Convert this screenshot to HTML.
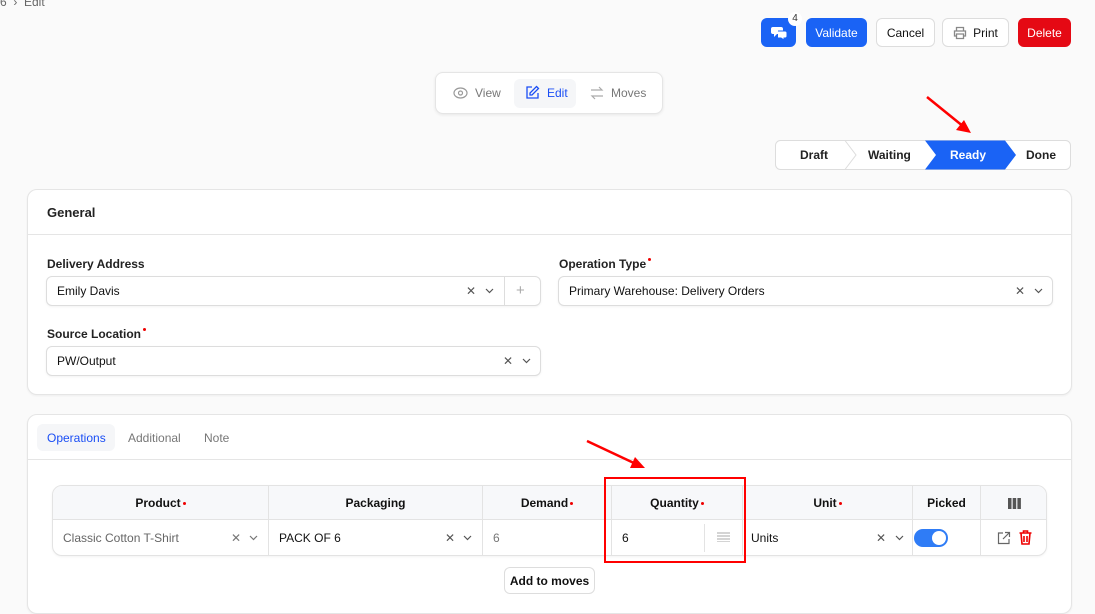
<!DOCTYPE html>
<html><head><meta charset="utf-8"><style>
*{box-sizing:border-box;margin:0;padding:0}
body{width:1095px;height:604px;overflow:hidden;background:#fafafa;font-family:"Liberation Sans",sans-serif;font-size:12px;color:#111;position:relative}
.a{position:absolute}
.btn{position:absolute;top:18px;height:29px;border-radius:6px;display:flex;align-items:center;justify-content:center;font-size:12px}
.card{position:absolute;background:#fff;border:1px solid #e5e5e5;border-radius:10px;box-shadow:0 1px 2px rgba(0,0,0,.05)}
.lbl{position:absolute;font-size:12px;font-weight:bold;color:#222}
.req{display:inline-block;width:3px;height:3px;border-radius:2px;background:#e00;vertical-align:top;margin-left:2px;margin-top:1px}
.inp{position:absolute;height:30px;border:1px solid #ddd;border-radius:6px;background:#fff;box-shadow:0 1px 2px rgba(0,0,0,.05);font-size:12px;padding-left:10px;display:flex;align-items:center}
.ic{position:absolute;color:#555;font-size:12px}
.cv{position:absolute;width:9px;height:6px}
.th{position:absolute;top:0;height:34px;display:flex;align-items:center;justify-content:center;font-weight:bold;font-size:12px;border-right:1px solid #e3e3e3}
.td{position:absolute;top:34px;height:36px;display:flex;align-items:center;padding-left:10px;font-size:12px;border-right:1px solid #e3e3e3}
</style></head><body>
<div class="a" style="left:0;top:-5px;font-size:12px;color:#666">6 &nbsp;›&nbsp; Edit</div>

<div class="btn" style="left:761px;width:35px;background:#1a63f5;color:#fff"><svg width="16" height="14" viewBox="0 0 16 14"><path d="M2 1h8a2 2 0 0 1 2 2v3a2 2 0 0 1-2 2H6l-3 3V8H2a2 2 0 0 1-2-2V3a2 2 0 0 1 2-2z" fill="#fff"/><path d="M7 5h7a2 2 0 0 1 2 2v3a2 2 0 0 1-2 2h-1v2l-3-2H7" fill="#fff" stroke="#1a63f5"/></svg></div>
<div class="a" style="left:788px;top:12px;width:14px;height:14px;border-radius:7px;background:#fff;font-size:10px;text-align:center;line-height:13px;color:#333">4</div>
<div class="btn" style="left:806px;width:61px;background:#1a63f5;color:#fff">Validate</div>
<div class="btn" style="left:876px;width:59px;background:#fff;border:1px solid #ddd">Cancel</div>
<div class="btn" style="left:942px;width:67px;background:#fff;border:1px solid #ddd"><svg width="14" height="14" viewBox="0 0 14 14" fill="none" stroke="#888" stroke-width="1.3" style="margin-right:6px"><path d="M3.5 5V1.5h7V5M3.5 10H1.5V5h11v5h-2M3.5 8h7v4.5h-7z"/></svg>Print</div>
<div class="btn" style="left:1018px;width:53px;background:#e50914;color:#fff">Delete</div>

<div class="a" style="left:435px;top:72px;width:228px;height:42px;background:#fff;border:1px solid #e5e5e5;border-radius:8px;box-shadow:0 1px 3px rgba(0,0,0,.08)"></div>
<div class="a" style="left:453px;top:86px;color:#777;display:flex;align-items:center"><svg width="15" height="14" viewBox="0 0 15 14" fill="none" stroke="#999" stroke-width="1.2"><ellipse cx="7.5" cy="7" rx="6.5" ry="5"/><circle cx="7.5" cy="7" r="2"/></svg><span style="margin-left:7px">View</span></div>
<div class="a" style="left:514px;top:79px;width:62px;height:29px;background:#f5f6f8;border-radius:6px"></div>
<div class="a" style="left:525px;top:85px;color:#1a4ef5;display:flex;align-items:center"><svg width="15" height="15" viewBox="0 0 15 15" fill="none" stroke="#1a4ef5" stroke-width="1.3"><path d="M7 2H2v11h11V8M11.5 1.5l2 2L7 10H5V8z"/></svg><span style="margin-left:7px">Edit</span></div>
<div class="a" style="left:590px;top:86px;color:#777;display:flex;align-items:center"><svg width="14" height="14" viewBox="0 0 14 14" fill="none" stroke="#aaa" stroke-width="1.2"><path d="M1 4h11l-3-3M13 10H2l3 3"/></svg><span style="margin-left:7px">Moves</span></div>

<svg class="a" style="left:775px;top:140px" width="297" height="31">
<rect x="0.5" y="0.5" width="295" height="29" rx="5" fill="#fff" stroke="#ddd"/>
<path d="M150 0.5h80l11 14.5-11 14.5h-80l11-14.5z" fill="#1a63f5"/>
<path d="M70 0.5l11 14.5-11 14.5" fill="none" stroke="#ddd"/>
<text x="25" y="19" font-size="12" font-family="Liberation Sans" font-weight="bold" fill="#222">Draft</text>
<text x="93" y="19" font-size="12" font-family="Liberation Sans" font-weight="bold" fill="#222">Waiting</text>
<text x="175" y="19" font-size="12" fill="#fff" font-family="Liberation Sans" font-weight="bold">Ready</text>
<text x="251" y="19" font-size="12" font-family="Liberation Sans" font-weight="bold" fill="#222">Done</text>
</svg>

<div class="card" style="left:27px;top:189px;width:1045px;height:206px"></div>
<div class="a" style="left:28px;top:234px;width:1043px;height:1px;background:#e5e5e5"></div>
<div class="lbl" style="left:47px;top:205px;font-size:13px">General</div>
<div class="lbl" style="left:47px;top:257px">Delivery Address</div>
<div class="inp" style="left:46px;top:276px;width:495px">Emily Davis</div>
<div class="ic" style="left:466px;top:284px">✕</div><svg class="cv" style="left:485px;top:288px"><path d="M1 1l3.5 3.5L8 1" fill="none" stroke="#555" stroke-width="1.2"/></svg>
<div class="a" style="left:504px;top:277px;width:1px;height:28px;background:#ddd"></div>
<div class="ic" style="left:516px;top:282px;color:#aaa;font-size:15px">+</div>
<div class="lbl" style="left:559px;top:257px">Operation Type<span class="req"></span></div>
<div class="inp" style="left:558px;top:276px;width:495px">Primary Warehouse: Delivery Orders</div>
<div class="ic" style="left:1015px;top:284px">✕</div><svg class="cv" style="left:1034px;top:288px"><path d="M1 1l3.5 3.5L8 1" fill="none" stroke="#555" stroke-width="1.2"/></svg>
<div class="lbl" style="left:47px;top:327px">Source Location<span class="req"></span></div>
<div class="inp" style="left:46px;top:346px;width:495px">PW/Output</div>
<div class="ic" style="left:503px;top:354px">✕</div><svg class="cv" style="left:522px;top:358px"><path d="M1 1l3.5 3.5L8 1" fill="none" stroke="#555" stroke-width="1.2"/></svg>

<div class="card" style="left:27px;top:414px;width:1045px;height:200px"></div>
<div class="a" style="left:37px;top:424px;width:78px;height:27px;background:#f5f6f8;border-radius:6px"></div>
<div class="a" style="left:47px;top:431px;color:#1a4ef5">Operations</div>
<div class="a" style="left:128px;top:431px;color:#777">Additional</div>
<div class="a" style="left:204px;top:431px;color:#777">Note</div>
<div class="a" style="left:28px;top:459px;width:1043px;height:1px;background:#e5e5e5"></div>

<div class="a" style="left:52px;top:485px;width:995px;height:71px;border:1px solid #e3e3e3;border-radius:10px;background:#fff;overflow:hidden;box-shadow:0 1px 2px rgba(0,0,0,.05)">
<div class="a" style="left:0;top:0;width:995px;height:34px;background:#f7f8fa;border-bottom:1px solid #e3e3e3"></div>
<div class="th" style="left:0;width:216px">Product<span class="req"></span></div>
<div class="th" style="left:216px;width:214px">Packaging</div>
<div class="th" style="left:430px;width:129px">Demand<span class="req"></span></div>
<div class="th" style="left:559px;width:131px">Quantity<span class="req"></span></div>
<div class="th" style="left:690px;width:170px">Unit<span class="req"></span></div>
<div class="th" style="left:860px;width:68px">Picked</div>
<div class="th" style="left:928px;width:67px;border:0"><svg width="13" height="11"><rect x="0" y="0" width="3.5" height="11" fill="#555"/><rect x="4.7" y="0" width="3.5" height="11" fill="#555"/><rect x="9.4" y="0" width="3.5" height="11" fill="#555"/></svg></div>
<div class="td" style="left:0;width:216px;color:#666">Classic Cotton T-Shirt</div>
<div class="ic" style="left:178px;top:45px;color:#777">✕</div><svg class="cv" style="left:196px;top:49px"><path d="M1 1l3.5 3.5L8 1" fill="none" stroke="#777" stroke-width="1.2"/></svg>
<div class="td" style="left:216px;width:214px">PACK OF 6</div>
<div class="ic" style="left:392px;top:45px">✕</div><svg class="cv" style="left:410px;top:49px"><path d="M1 1l3.5 3.5L8 1" fill="none" stroke="#555" stroke-width="1.2"/></svg>
<div class="td" style="left:430px;width:129px;color:#777">6</div>
<div class="td" style="left:559px;width:131px">6</div>
<div class="a" style="left:651px;top:38px;width:1px;height:28px;background:#e3e3e3"></div>
<svg class="a" style="left:664px;top:46px" width="13" height="10"><path d="M0 1h13M0 4h13M0 7h13M0 10h13" stroke="#aaa"/></svg>
<div class="td" style="left:690px;width:170px;padding-left:8px">Units</div>
<div class="ic" style="left:823px;top:45px">✕</div><svg class="cv" style="left:842px;top:49px"><path d="M1 1l3.5 3.5L8 1" fill="none" stroke="#555" stroke-width="1.2"/></svg>
<div class="td" style="left:860px;width:68px;padding-left:1px"><div style="width:34px;height:18px;border-radius:9px;background:#2f7cf6;position:relative"><div style="position:absolute;right:2px;top:2px;width:14px;height:14px;border-radius:7px;background:#fff"></div></div></div>
<svg class="a" style="left:944px;top:45px" width="14" height="14" fill="none" stroke="#666" stroke-width="1.2"><path d="M6 2H1.5v10.5H12V8M8 1.5h4.5V6M12.5 1.5L6 8"/></svg>
<svg class="a" style="left:966px;top:44px" width="13" height="15" fill="none" stroke="#e00" stroke-width="1.6"><path d="M0.5 3h12M4.5 3V1h4v2M2 3l1 11h7l1-11M5 6v6M8 6v6"/></svg>
</div>

<div class="a" style="left:504px;top:567px;width:91px;height:27px;border:1px solid #ddd;border-radius:6px;background:#fff;font-size:12px;font-weight:bold;display:flex;align-items:center;justify-content:center">Add to moves</div>

<div class="a" style="left:604px;top:477px;width:142px;height:86px;border:2.5px solid #f00"></div>
<svg class="a" style="left:0;top:0" width="1095" height="604">
<path d="M927 97L964 127" stroke="#f00" stroke-width="2.5"/><path d="M971 133l-15-3 8-10z" fill="#f00"/>
<path d="M587 441L636 464" stroke="#f00" stroke-width="2.5"/><path d="M645 468l-15 0 5-11z" fill="#f00"/>
</svg>
</body></html>
